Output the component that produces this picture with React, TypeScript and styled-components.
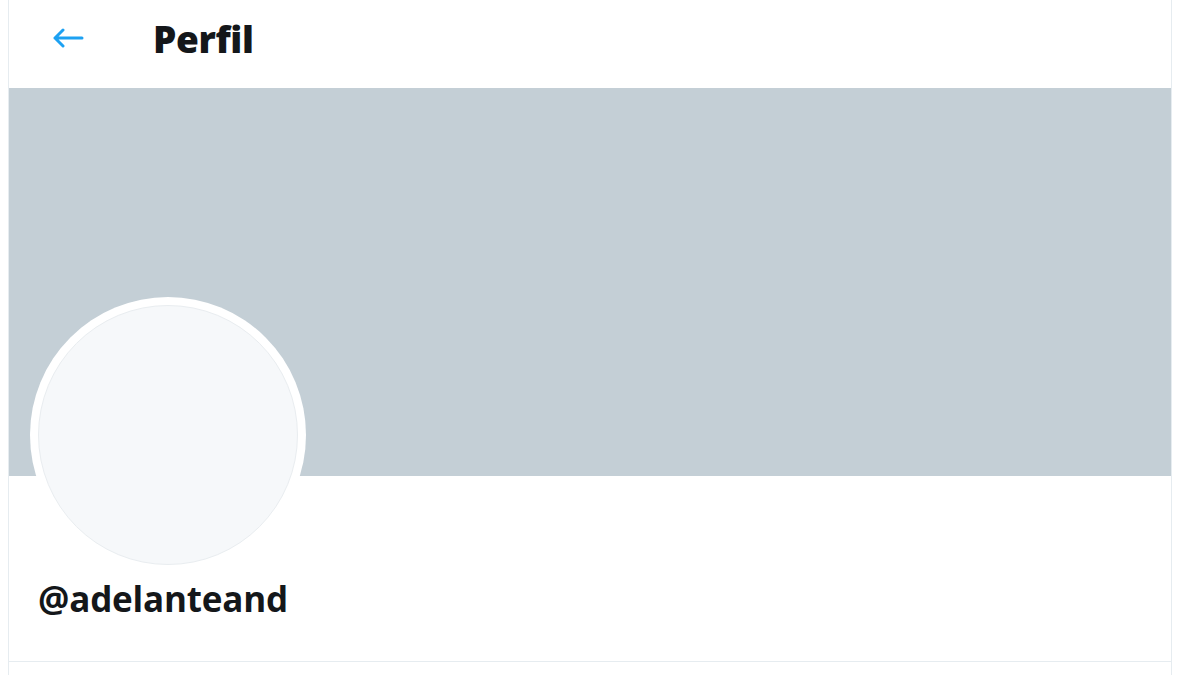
import styled, { createGlobalStyle } from "styled-components";

const GlobalStyle = createGlobalStyle`
  html, body {
    margin: 0;
    padding: 0;
    background: #ffffff;
    font-family: "Open Sans", "Noto Sans", sans-serif;
    color: #14171a;
  }
`;

export default function App() {
  return (
    <>
      <GlobalStyle />
      <Page>
        <Column>
          <Header>
            <BackButton aria-label="Volver">
              <svg width="32" height="20" viewBox="0 0 32 20" fill="none">
                <path
                  d="M30 10H3M11 2L3 10L11 18"
                  stroke="#1da1f2"
                  strokeWidth="3"
                  strokeLinecap="round"
                  strokeLinejoin="round"
                />
              </svg>
            </BackButton>
            <Title>Perfil</Title>
          </Header>
          <Banner />
          <ProfileInfo>
            <Avatar>
              <AvatarInner />
            </Avatar>
            <Handle>@adelanteand</Handle>
          </ProfileInfo>
        </Column>
      </Page>
    </>
  );
}

const Page = styled.div`
  display: flex;
  padding-left: 8px;
  min-height: 675px;
  box-sizing: border-box;
`;

const Column = styled.main`
  width: 1164px;
  border-left: 1px solid #e6ecf0;
  border-right: 1px solid #e6ecf0;
  height: 675px;
  box-sizing: border-box;
  overflow: hidden;
`;

const Header = styled.header`
  height: 88px;
  display: flex;
  align-items: center;
  padding: 0 0 12px 43px;
  box-sizing: border-box;
`;

const BackButton = styled.div`
  width: 32px;
  height: 20px;
  display: flex;
  align-items: center;
  margin-right: 69px;
`;

const Title = styled.h1`
  margin: 0;
  font-size: 37px;
  font-weight: 800;
  letter-spacing: -0.4px;
  line-height: 1;
`;

const Banner = styled.div`
  height: 388px;
  background: #c4cfd6;
`;

const ProfileInfo = styled.section`
  display: flex;
  flex-direction: column;
  align-items: flex-start;
  padding: 0 0 0 21px;
  height: 186px;
  border-bottom: 1px solid #e6ecf0;
  box-sizing: border-box;
`;

const Avatar = styled.div`
  width: 276px;
  height: 276px;
  margin-top: -179px;
  border-radius: 50%;
  background: #ffffff;
  display: flex;
  align-items: center;
  justify-content: center;
  flex-shrink: 0;
`;

const AvatarInner = styled.div`
  width: 260px;
  height: 260px;
  border-radius: 50%;
  background: #f6f8fa;
  border: 1px solid #e9edf0;
  box-sizing: border-box;
`;

const Handle = styled.h2`
  margin: 4px 0 0 8px;
  font-size: 35px;
  font-weight: 700;
  line-height: 44px;
  letter-spacing: -0.2px;
`;
